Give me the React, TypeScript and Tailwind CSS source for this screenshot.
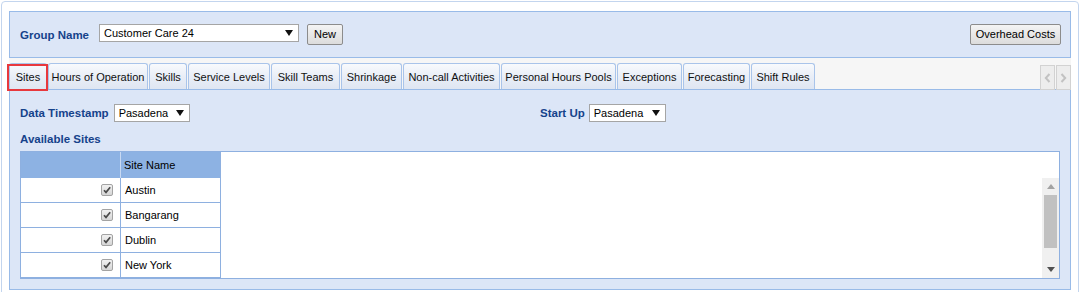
import React from "react";

const tabs = [
  { label: "Sites", w: 38 },
  { label: "Hours of Operation", w: 100 },
  { label: "Skills", w: 38 },
  { label: "Service Levels", w: 82 },
  { label: "Skill Teams", w: 69 },
  { label: "Shrinkage", w: 61 },
  { label: "Non-call Activities", w: 97 },
  { label: "Personal Hours Pools", w: 115 },
  { label: "Exceptions", w: 65 },
  { label: "Forecasting", w: 67 },
  { label: "Shift Rules", w: 64 },
];

const sites = ["Austin", "Bangarang", "Dublin", "New York"];

function Arrow() {
  return (
    <svg width="8" height="6" viewBox="0 0 8 6" className="shrink-0">
      <polygon points="0,0 8,0 4,6" fill="#111" />
    </svg>
  );
}

function Select({ value, w }: { value: string; w: string }) {
  return (
    <div className={`${w} h-[18px] bg-white border border-[#a5a5a5] flex items-center justify-between pl-[4px] pr-[5px] text-[11px] text-black`}>
      <span>{value}</span>
      <Arrow />
    </div>
  );
}

function Button({ children, w }: { children: React.ReactNode; w: string }) {
  return (
    <div className={`${w} h-[21px] border border-[#8c8c8c] rounded-[2px] bg-gradient-to-b from-[#f4f4f4] to-[#dcdcdc] flex items-center justify-center text-[11px] text-black`}>
      {children}
    </div>
  );
}

function Checkbox() {
  return (
    <svg width="12" height="12" viewBox="0 0 12 12">
      <defs>
        <linearGradient id="cb" x1="0" y1="0" x2="0" y2="1">
          <stop offset="0" stopColor="#f2f2f2" />
          <stop offset="1" stopColor="#d4d4d4" />
        </linearGradient>
      </defs>
      <rect x="0.5" y="0.5" width="11" height="11" rx="1.5" fill="url(#cb)" stroke="#a3a3a3" />
      <path d="M3 6.2 L5 8.4 L9.2 3.2" fill="none" stroke="#4a4a4a" strokeWidth="1.7" />
    </svg>
  );
}

export default function App() {
  return (
    <div className="w-[1081px] h-[292px] overflow-hidden bg-white font-['Liberation_Sans',Arial,sans-serif]">
      <div className="ml-[1px] mt-[1px] w-[1078px] h-[300px] border border-[#c3d5ee] rounded-[4px] px-[7px] pt-[9px]">
        {/* header */}
        <div className="h-[47px] border border-[#99bbe8] bg-[#dce6f7] flex items-start pt-[12px] pl-[10px] pr-[9px]">
          <span className="mt-[2px] leading-[18px] text-[11.5px] font-bold text-[#15428b] w-[79px]">Group Name</span>
          <Select value="Customer Care 24" w="w-[200px]" />
          <div className="ml-[8px]">
            <Button w="w-[36px]">New</Button>
          </div>
          <div className="ml-auto">
            <Button w="w-[91px]">Overhead Costs</Button>
          </div>
        </div>

        {/* tab strip */}
        <div className="h-[31px] bg-[#f6f6f6] flex items-end">
          <div className="flex items-end gap-[1px]">
            {tabs.map((t, i) => (
              <div
                key={t.label}
                style={{ width: t.w }}
                className="relative h-[26px] border border-b-0 border-[#a9c4ea] rounded-t-[3px] bg-gradient-to-b from-[#f8fafd] via-[#e9eef7] to-[#dfe6f2] flex items-center justify-center text-[11px] text-[#111] pt-[2px]"
              >
                {i === 0 && <div className="absolute left-0 right-0 top-0 h-[1px] bg-[#f3c26a]" />}
                {t.label}
                {i === 0 && (
                  <div className="absolute left-[-3px] right-[-2px] top-[0px] bottom-[-2px] border-2 border-[#e8383d] z-10" />
                )}
              </div>
            ))}
          </div>
          <div className="ml-auto flex gap-[1px] mb-[-1px]">
            <div className="w-[15px] h-[25px] bg-[#ededed] border border-[#d2d2d2] flex items-center justify-center">
              <svg width="7" height="10" viewBox="0 0 7 10">
                <path d="M5.5 1 L1.8 5 L5.5 9" fill="none" stroke="#c2c2c2" strokeWidth="2" />
              </svg>
            </div>
            <div className="w-[15px] h-[25px] bg-[#ededed] border border-[#d2d2d2] flex items-center justify-center">
              <svg width="7" height="10" viewBox="0 0 7 10">
                <path d="M1.5 1 L5.2 5 L1.5 9" fill="none" stroke="#c2c2c2" strokeWidth="2" />
              </svg>
            </div>
          </div>
        </div>

        {/* content panel */}
        <div className="h-[201px] border border-[#99bbe8] bg-[#dce6f7] px-[10px] pt-[14px]">
          <div className="grid grid-cols-2">
            <div className="flex items-center gap-[5px]">
              <span className="leading-[18px] text-[11.5px] font-bold text-[#15428b]">Data Timestamp</span>
              <Select value="Pasadena" w="w-[76px]" />
            </div>
            <div className="flex items-center gap-[4px]">
              <span className="leading-[18px] text-[11.5px] font-bold text-[#15428b]">Start Up</span>
              <Select value="Pasadena" w="w-[77px]" />
            </div>
          </div>
          <div className="mt-[8px] leading-[18px] text-[11.5px] font-bold text-[#15428b]">Available Sites</div>

          <div className="mt-[3px] h-[128px] border border-[#8eb0e0] bg-white flex">
            <div className="w-[200px] text-[11px] text-black">
              <div className="h-[26px] bg-[#8db2e3] flex">
                <div className="w-[100px] border-r border-[#c8d9f2]" />
                <div className="w-[100px] border-r border-[#8eb0e0] flex items-center pl-[3px]">Site Name</div>
              </div>
              {sites.map((s) => (
                <div key={s} className="h-[25px] border-b border-[#8eb0e0] flex">
                  <div className="w-[100px] border-r border-[#8eb0e0] flex items-center justify-end pr-[7px]">
                    <Checkbox />
                  </div>
                  <div className="w-[100px] border-r border-[#8eb0e0] flex items-center pl-[4px]">{s}</div>
                </div>
              ))}
            </div>
            <div className="flex-1" />
            <div className="w-[17px] flex flex-col">
              <div className="h-[26px]" />
              <div className="flex-1 bg-[#f0f0f0] flex flex-col items-center">
                <div className="h-[17px] flex items-center justify-center">
                  <svg width="8" height="5" viewBox="0 0 8 5">
                    <polygon points="4,0 8,5 0,5" fill="#a3a3a3" />
                  </svg>
                </div>
                <div className="w-[13px] h-[53px] bg-[#c1c1c1]" />
                <div className="flex-1" />
                <div className="h-[17px] flex items-center justify-center">
                  <svg width="8" height="5" viewBox="0 0 8 5">
                    <polygon points="0,0 8,0 4,5" fill="#505050" />
                  </svg>
                </div>
              </div>
            </div>
          </div>
        </div>
      </div>
    </div>
  );
}
